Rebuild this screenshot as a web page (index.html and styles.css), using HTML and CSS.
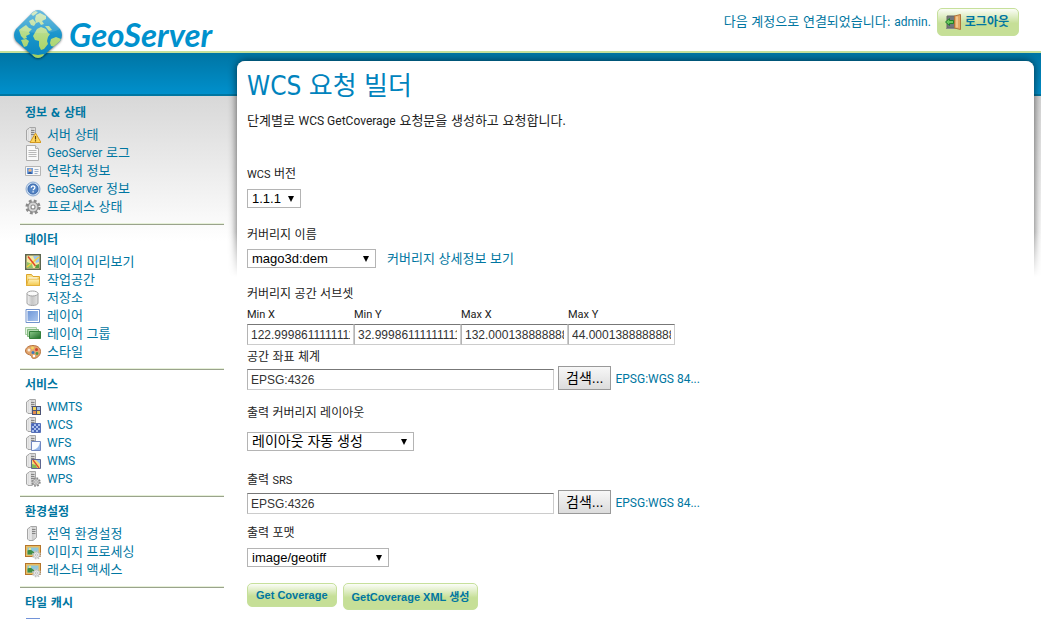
FILE: index.html
```html
<!DOCTYPE html>
<html lang="ko">
<head>
<meta charset="utf-8">
<title>GeoServer: WCS 요청 빌더</title>
<link rel="stylesheet" href="styles.css">
</head>
<body>
<svg class="sprite" aria-hidden="true">
  <defs>
    <linearGradient id="gServer" x1="0" x2="1"><stop offset="0" stop-color="#f4f4f4"/><stop offset=".45" stop-color="#c6c6c6"/><stop offset="1" stop-color="#e2e2e2"/></linearGradient>
    <linearGradient id="gBlue" x1="0" y1="0" x2="1" y2="1"><stop offset="0" stop-color="#6f97d8"/><stop offset="1" stop-color="#a9c4ec"/></linearGradient>
    <linearGradient id="gGreen" x1="0" y1="0" x2="1" y2="1"><stop offset="0" stop-color="#8cc98a"/><stop offset="1" stop-color="#1d6b26"/></linearGradient>
    <linearGradient id="gFolder" x1="0" y1="0" x2="0" y2="1"><stop offset="0" stop-color="#fff3bd"/><stop offset="1" stop-color="#f3c84c"/></linearGradient>
    <linearGradient id="gGlobe" x1="0" y1="0" x2="0" y2="1"><stop offset="0" stop-color="#57b4dc"/><stop offset=".5" stop-color="#1a95cb"/><stop offset="1" stop-color="#0a86c0"/></linearGradient>
    <linearGradient id="gLand" gradientUnits="userSpaceOnUse" x1="0" y1="4" x2="0" y2="50"><stop offset="0" stop-color="#cfe8c0"/><stop offset=".5" stop-color="#b5db84"/><stop offset="1" stop-color="#a4d05c"/></linearGradient>
    <g id="server">
      <path d="M1.500 3 5 .5h5.500v11L7 14.500H3l-1.500-1.500z" fill="url(#gServer)" stroke="#a6a6a6"/>
      <path d="M5 1v13" stroke="#fff"/>
      <path d="M6 3.500h3.500M6 5.500h3.500M6 7.500h3.500" stroke="#858585"/>
    </g>
    <g id="gear">
      <circle r="5" fill="none" stroke="#8b8b8b" stroke-width="3.500" stroke-dasharray="2.200 1.730"/>
      <circle r="4.500" fill="#d5d5d5" stroke="#8b8b8b"/>
      <circle r="1.800" fill="#fff" stroke="#8b8b8b"/>
    </g>
    <g id="softgear">
      <circle r="4.500" fill="none" stroke="#c4c4c4" stroke-width="3.500" stroke-dasharray="2 1.530"/>
      <circle r="4" fill="#ececec" stroke="#bdbdbd"/>
      <circle r="1.500" fill="#fff" stroke="#aaa"/>
    </g>
    <g id="picture">
      <path d="M0 1h16v12H0z" fill="#b5762c"/><path d="M1 2h14v10H1z" fill="#e9bd62"/>
      <path d="M2.500 3.500h11v7h-11z" fill="#8fc8dc"/><path d="M2.500 10.500v-4l3-1 4 3 4-1v3z" fill="#3f8e45"/><circle cx="5" cy="5" r="1" fill="#fff27a"/>
    </g>
  </defs>
  <symbol id="i-status" viewBox="0 0 16 16"><use href="#server"/><path d="M10.500 6 16 15.500H5z" fill="#ffd65c" stroke="#d49a22"/><path d="M10.500 9v3.500M10.500 13.300v1.200" stroke="#6a4300" stroke-width="1.200"/></symbol>
  <symbol id="i-log" viewBox="0 0 16 16"><path d="M1.500.5h9l3 3v12h-12z" fill="#fafafa" stroke="#aeaeae"/><path d="M10.500.5v3h3" fill="#e5e5e5" stroke="#aeaeae"/><path d="M3.500 5.500h8M3.500 7.500h8M3.500 9.500h8M3.500 11.500h8" stroke="#b9b9b9"/></symbol>
  <symbol id="i-contact" viewBox="0 0 16 16"><path d="M.5 3.500h15v9H.5z" fill="#f7f7f7" stroke="#b5b5b5"/><path d="M2 5h6v6H2z" fill="#6f9ddb"/><circle cx="5" cy="7.200" r="1.500" fill="#f3b67a"/><path d="M3 11c0-3 4-3 4 0z" fill="#2c5a9f"/><path d="M9.500 6.500h4M9.500 8.500h4M9.500 10.500h3" stroke="#9db0c8"/></symbol>
  <symbol id="i-about" viewBox="0 0 16 16"><circle cx="8" cy="8" r="7" fill="#c7dbf2" stroke="#8fabd0"/><circle cx="8" cy="8" r="5" fill="#5384c4" stroke="#3865a8"/><path d="M6.200 6.800c0-2.400 3.700-2.400 3.700-.2 0 1.400-1.800 1.300-1.800 2.700M8.100 10.300v1.200" fill="none" stroke="#fff" stroke-width="1.300"/></symbol>
  <symbol id="i-process" viewBox="0 0 16 16"><use href="#gear" transform="translate(8 8) scale(1.120)"/></symbol>
  <symbol id="i-preview" viewBox="0 0 16 16"><path d="M.75.75h14.500v14.500H.75z" fill="#f4e9a0" stroke="#5d6650" stroke-width="1.500"/><path d="M8 2h6v6l-3 1z" fill="#9cc6ee"/><path d="M2 8l5 2 1 4H2z" fill="#8fc468"/><path d="M2 13 14 3" stroke="#f7d040" stroke-width="1.500"/><path d="M3 2.500 10.500 12" stroke="#e0452a" stroke-width="1.500"/><path d="M10 14l1-3 3-1v4z" fill="#5b9b42"/></symbol>
  <symbol id="i-folder" viewBox="0 0 16 16"><path d="M1.500 13.500v-11h5l1.500 2h6.500v9z" fill="#f8dd7f" stroke="#dda52a"/><path d="M1.500 13.500 3.500 7h11v6.500z" fill="url(#gFolder)" stroke="#e3b03a"/><path d="M3.500 6h9" stroke="#fff"/></symbol>
  <symbol id="i-store" viewBox="0 0 16 16"><path d="M2 3.500v9.500c0 3.300 11 3.300 11 0V3.500z" fill="url(#gServer)" stroke="#a3a3a3"/><ellipse cx="7.500" cy="3.500" rx="5.500" ry="2.500" fill="#fafafa" stroke="#a3a3a3"/></symbol>
  <symbol id="i-layer" viewBox="0 0 16 16"><path d="M1 1.500h13.500v13H1z" fill="#fff" stroke="#7293cc"/><path d="M2.500 3H13v10H2.500z" fill="url(#gBlue)"/></symbol>
  <symbol id="i-group" viewBox="0 0 16 16"><path d="M.5 1.500h11v7H.5z" fill="#e2f2df" stroke="#a8cfa5"/><path d="M2.500 3.500h11v7h-11z" fill="#b5dbb2" stroke="#80b77d"/><path d="M4.500 5.500h11v7h-11z" fill="url(#gGreen)" stroke="#35803a"/></symbol>
  <symbol id="i-style" viewBox="0 0 16 16"><path d="M8 1.500c4 0 7.500 2 7.500 6 0 4-3.500 7-7 7-2 0-1.500-2-2.500-3S.5 10.500.5 7C.5 3.500 4 1.500 8 1.500z" fill="#e2a56e" stroke="#b8743f"/><circle cx="4" cy="6" r="1.500" fill="#f9eedd"/><circle cx="7.500" cy="4" r="1.400" fill="#f5d75c"/><circle cx="11.500" cy="5.500" r="1.500" fill="#d7402c"/><circle cx="12" cy="9.500" r="1.400" fill="#4d9b48"/><circle cx="8" cy="8.500" r="1.500" fill="#3f79c2"/><circle cx="9" cy="12" r="1.200" fill="#fff"/></symbol>
  <symbol id="i-wmts" viewBox="0 0 16 16"><use href="#server"/><path d="M7 7h9v9H7z" fill="#4b5375"/><path d="M8 8h3v3H8zM12 12h3v3h-3z" fill="#f0d45a"/><path d="M12 8h3v3h-3z" fill="#9fc2ef"/><path d="M8 12h3v3H8z" fill="#e58d4d"/></symbol>
  <symbol id="i-wcs" viewBox="0 0 16 16"><use href="#server"/><path d="M6.500 6.500h9v9h-9z" fill="#a8bfec" stroke="#5670b8"/><path d="M7 7h2v2H7zM11 7h2v2h-2zM9 9h2v2H9zM13 9h2v2h-2zM7 11h2v2H7zM11 11h2v2h-2zM9 13h2v2H9zM13 13h2v2h-2z" fill="#4a66b8"/></symbol>
  <symbol id="i-wfs" viewBox="0 0 16 16"><use href="#server"/><path d="M6.500 6.500h9v9h-9z" fill="#f8fbff" stroke="#7187c0"/><path d="M15 7v8H8c4-1 6-3 7-8z" fill="#96b6ea"/></symbol>
  <symbol id="i-wms" viewBox="0 0 16 16"><use href="#server"/><path d="M6.500 6.500h9v9h-9z" fill="#f3dd78" stroke="#5e6690"/><path d="M11 7h4v4z" fill="#93bdf0"/><path d="M7 11l4 1 1 3H7z" fill="#82b857"/><path d="M8 7l6 8" stroke="#dc4b30" stroke-width="1.300"/></symbol>
  <symbol id="i-wps" viewBox="0 0 16 16"><use href="#server"/><use href="#gear" transform="translate(11 11) scale(.700)"/></symbol>
  <symbol id="i-global" viewBox="0 0 16 16"><use href="#server" x="1"/></symbol>
  <symbol id="i-image" viewBox="0 0 16 16"><use href="#picture"/><use href="#softgear" transform="translate(11.500 11) scale(.720)"/></symbol>
  <symbol id="i-tile" viewBox="0 0 16 16"><path d="M1 1h14v14H1z" fill="#7293d8"/><path d="M3 3h4v4H3zM9 3h4v4H9zM3 9h4v4H3zM9 9h4v4H9z" fill="#b8cdf2"/></symbol>
</svg>

<header class="header">
  <a class="logo" href="#">
    <svg class="logo-mark" viewBox="0 0 54 54" aria-hidden="true">
      <defs><clipPath id="diamond"><path d="M22 4Q27 0 32 4L49 21Q53 27 49 33L32 48Q27 52 22 48L5 33Q1 27 5 21Z"/></clipPath></defs>
      <path class="logo-edge" d="M22 4Q27 0 32 4L49 21Q53 27 49 33L32 48Q27 52 22 48L5 33Q1 27 5 21Z" fill="url(#gGlobe)"/>
      <g clip-path="url(#diamond)">
        <path fill="url(#gLand)" d="M20 6l4-3 3 1-2 2-3 2zM25 7l4-2 6 3 0 3-4 2 2 3-3 1-2-3-3 1-1-4zM18 13l4-2 3 4-2 3-3-1zM8 22l4-3 3-2 3 3 3 1-3 3 1 2-4 2 1 2-3 1-3-3zM10 32l5-1 3 2-2 5-3 1z"/>
        <path fill="url(#gLand)" d="M26 21l4-2 5 2 2 4 2 1-2 3-1 4 1 3-4 5-3 1-2-4 0-5-4-1-2-4zM40 31l5-2 5 2-1 4-5 4-4-1-1-3zM34 18l4 0 3 4-3 1zM21 46l6 1 6-1-2 6h-6z"/>
      </g>
      <path d="M22 4Q27 0 32 4L49 21Q40 26 27 25T5 21Z" fill="#fff" opacity=".12"/>
    </svg>
    <span class="logo-name">GeoServer</span>
  </a>
  <div class="login">
    <span>다음 계정으로 연결되었습니다: <span class="latin">admin.</span></span>
    <button class="button logout" type="button">
      <svg class="icon" viewBox="0 0 16 16" aria-hidden="true"><path d="M2 2h8v12H2z" fill="#73777b" stroke="#666"/><path d="M1 14.500h13" stroke="#8a8a8a"/><path d="M9.500 2 15.500.5v15l-6-1.500z" fill="#e3a765" stroke="#b0743c"/><path d="M12 2.500v11" stroke="#f4cf9c" stroke-width="1.500"/><path d="M.5 8 4.500 4.500v2h4v3h-4v2z" fill="#69c75c" stroke="#22812c"/></svg>
      로그아웃
    </button>
  </div>
</header>

<div class="page">
  <nav class="sidebar">
    <section class="group">
      <h2>정보 &amp; 상태</h2>
      <ul>
        <li><a href="#"><svg class="icon"><use href="#i-status"/></svg>서버 상태</a></li>
        <li><a href="#"><svg class="icon"><use href="#i-log"/></svg><span><span class="latin">GeoServer</span> 로그</span></a></li>
        <li><a href="#"><svg class="icon"><use href="#i-contact"/></svg>연락처 정보</a></li>
        <li><a href="#"><svg class="icon"><use href="#i-about"/></svg><span><span class="latin">GeoServer</span> 정보</span></a></li>
        <li><a href="#"><svg class="icon"><use href="#i-process"/></svg>프로세스 상태</a></li>
      </ul>
    </section>
    <section class="group">
      <h2>데이터</h2>
      <ul>
        <li><a href="#"><svg class="icon"><use href="#i-preview"/></svg>레이어 미리보기</a></li>
        <li><a href="#"><svg class="icon"><use href="#i-folder"/></svg>작업공간</a></li>
        <li><a href="#"><svg class="icon"><use href="#i-store"/></svg>저장소</a></li>
        <li><a href="#"><svg class="icon"><use href="#i-layer"/></svg>레이어</a></li>
        <li><a href="#"><svg class="icon"><use href="#i-group"/></svg>레이어 그룹</a></li>
        <li><a href="#"><svg class="icon"><use href="#i-style"/></svg>스타일</a></li>
      </ul>
    </section>
    <section class="group">
      <h2>서비스</h2>
      <ul>
        <li><a href="#"><svg class="icon"><use href="#i-wmts"/></svg><span class="latin">WMTS</span></a></li>
        <li><a href="#"><svg class="icon"><use href="#i-wcs"/></svg><span class="latin">WCS</span></a></li>
        <li><a href="#"><svg class="icon"><use href="#i-wfs"/></svg><span class="latin">WFS</span></a></li>
        <li><a href="#"><svg class="icon"><use href="#i-wms"/></svg><span class="latin">WMS</span></a></li>
        <li><a href="#"><svg class="icon"><use href="#i-wps"/></svg><span class="latin">WPS</span></a></li>
      </ul>
    </section>
    <section class="group">
      <h2>환경설정</h2>
      <ul>
        <li><a href="#"><svg class="icon"><use href="#i-global"/></svg>전역 환경설정</a></li>
        <li><a href="#"><svg class="icon"><use href="#i-image"/></svg>이미지 프로세싱</a></li>
        <li><a href="#"><svg class="icon"><use href="#i-image"/></svg>래스터 액세스</a></li>
      </ul>
    </section>
    <section class="group">
      <h2>타일 캐시</h2>
      <ul>
        <li><a href="#" aria-label="타일 레이어"><svg class="icon"><use href="#i-tile"/></svg></a></li>
      </ul>
    </section>
  </nav>

  <main class="panel">
    <div class="panel-shadow"></div>
    <form class="content">
      <h1>WCS 요청 빌더</h1>
      <p class="intro">단계별로 <span class="latin">WCS GetCoverage</span> 요청문을 생성하고 요청합니다.</p>

      <div class="field first">
        <label for="version"><span class="latin">WCS</span> 버전</label>
        <select id="version" class="select w-version"><option>1.1.1</option></select>
      </div>

      <div class="field coverage">
        <label for="coverage">커버리지 이름</label>
        <div class="row wide">
          <select id="coverage" class="select w-coverage"><option>mago3d:dem</option></select>
          <a href="#">커버리지 상세정보 보기</a>
        </div>
      </div>

      <fieldset class="field bounds">
        <legend>커버리지 공간 서브셋</legend>
        <div class="bounds-grid">
          <label>Min X<input class="text" type="text" value="122.99986111111111"></label>
          <label>Min Y<input class="text" type="text" value="32.999861111111111"></label>
          <label>Max X<input class="text" type="text" value="132.00013888888889"></label>
          <label>Max Y<input class="text" type="text" value="44.000138888888889"></label>
        </div>
      </fieldset>

      <div class="field srs">
        <label for="crs">공간 좌표 체계</label>
        <div class="row">
          <input id="crs" class="text w-srs" type="text" value="EPSG:4326">
          <button class="search" type="button">검색...</button>
          <a class="latin" href="#">EPSG:WGS 84...</a>
        </div>
      </div>

      <div class="field layout">
        <label for="layout">출력 커버리지 레이아웃</label>
        <select id="layout" class="select korean w-layout"><option>레이아웃 자동 생성</option></select>
      </div>

      <div class="field output">
        <label for="target">출력 <span class="latin">SRS</span></label>
        <div class="row">
          <input id="target" class="text w-srs" type="text" value="EPSG:4326">
          <button class="search" type="button">검색...</button>
          <a class="latin" href="#">EPSG:WGS 84...</a>
        </div>
      </div>

      <div class="field format">
        <label for="format">출력 포맷</label>
        <select id="format" class="select w-format"><option>image/geotiff</option></select>
      </div>

      <div class="actions">
        <button class="button" type="button">Get Coverage</button>
        <button class="button tall" type="button">GetCoverage XML 생성</button>
      </div>
    </form>
  </main>
</div>
</body>
</html>
```

FILE: styles.css
```css
:root {
  --blue: #0076a1;
  --green: #c6e09b;
  --ui: "DejaVu Sans Condensed", "Noto Sans CJK KR", sans-serif;
  --latin: Roboto, "Noto Sans CJK KR", sans-serif;
  --control: "Liberation Sans", "Noto Sans CJK KR", sans-serif;
}

* { box-sizing: border-box; }

html { scrollbar-width: none; }

body {
  margin: 0;
  overflow-x: hidden;
  background: #fff;
  color: #222;
  font: 13px/18px var(--ui);
}

a { color: var(--blue); text-decoration: none; }

.sprite { position: absolute; width: 0; height: 0; }
.icon { flex: none; width: 16px; height: 16px; }
.latin { font-family: var(--latin); font-size: 12px; }

/* Header */
.header {
  display: flex;
  justify-content: space-between;
  height: 53px;
  padding: 8px 22px 0 11px;
  border-bottom: 2px solid var(--green);
}

.logo { display: flex; gap: 4px; }

.logo-mark {
  position: relative;
  z-index: 1;
  width: 54px;
  height: 54px;
}

.logo-edge { filter: drop-shadow(0 1px 1px rgba(0, 0, 0, .5)); }

.logo-name {
  color: #0091cd;
  font: italic 700 33px/52px Lato, sans-serif;
}

.login {
  display: flex;
  align-items: flex-start;
  gap: 6px;
  color: var(--blue);
  line-height: 28px;
}

/* Green buttons */
.button {
  display: flex;
  align-items: center;
  gap: 4px;
  height: 24px;
  padding: 0 8px;
  border: 1px solid var(--green);
  border-radius: 5px;
  background: linear-gradient(#fbfdf7, #c6df97 55%);
  color: var(--blue);
  font: bold 11px/18px var(--control);
}

.button.tall { height: 27px; }
.button.logout { height: 28px; padding: 0 9px 0 7px; font-size: 12px; }

/* Page frame */
.page {
  display: grid;
  grid-template-columns: 237px minmax(0, 1fr);
  padding-right: 7px;
  background:
    linear-gradient(#0075a4, #0090cc) 0 0 / 100% 41px no-repeat,
    linear-gradient(var(--blue), var(--blue)) 0 41px / 100% 2px no-repeat,
    linear-gradient(#d8d8d8, #fff) 0 43px / 100% 145px no-repeat;
}

/* Sidebar */
.sidebar { padding: 45px 13px 0 20px; }

.group {
  padding: 0 5px 8px;
  border-bottom: 1px solid #9aa38c;
  box-shadow: inset 0 -1px #e6f0d8;
}

.group h2 {
  margin: 0;
  padding-top: 2px;
  color: var(--blue);
  font: bold 12px/26px var(--ui);
}

.group ul { margin: 0; padding: 0; list-style: none; }
.group a { display: flex; align-items: center; gap: 6px; height: 18px; }

/* Content panel */
.panel {
  position: relative;
  margin-top: 8px;
  border-radius: 8px;
  background: #fff;
}

.panel-shadow {
  position: absolute;
  inset: -10px -10px auto;
  height: 226px;
  overflow: hidden;
  -webkit-mask-image: linear-gradient(#000 80%, transparent);
  mask-image: linear-gradient(#000 80%, transparent);
}

.panel-shadow::before {
  position: absolute;
  inset: 10px 10px -20px;
  border-radius: 8px;
  background: #fff;
  box-shadow: 0 0 9px rgba(0, 0, 0, .65);
  content: "";
}

.content { position: relative; padding: 7px 10px 16px; }

h1 {
  margin: 0;
  color: #0083bd;
  font: 26px/36px var(--ui);
}

.intro { margin: 8px 0 0; }

/* Form fields */
.field { margin: 17px 0 0; padding: 0; border: 0; }
.field.first { margin-top: 35px; }
.field.coverage { margin-top: 18px; }
.field.srs { margin-top: 3px; }
.field.layout { margin-top: 14px; }
.field.output { margin-top: 20px; }
.field.format { margin-top: 10px; }

.field > label,
legend {
  display: block;
  margin-bottom: 5px;
  padding: 0;
  font-size: 12px;
}

.field > label .latin { font-size: 11px; }
.field.srs > label, .field.output > label { margin-bottom: 0; }
.field.layout > label { margin-bottom: 10px; }
.field.format > label { margin-bottom: 6px; }
.field.bounds > legend { margin-bottom: 3px; }

.row { display: flex; align-items: flex-end; gap: 4px; }
.row.wide { align-items: center; gap: 11px; }
.row .latin { line-height: 22px; }

.select {
  display: block;
  height: 19px;
  padding: 0 16px 0 4px;
  border: 1px solid #b4b4b4;
  border-radius: 0;
  appearance: none;
  background: #fff url("data:image/svg+xml,%3Csvg xmlns='http://www.w3.org/2000/svg' width='6' height='6'%3E%3Cpath d='M0 0h6L3 6z'/%3E%3C/svg%3E") right 6px center no-repeat;
  color: #000;
  font: 13px/17px var(--control);
}

.select.korean { font-size: 14px; }
.w-version { width: 54px; }
.w-coverage { width: 129px; }
.w-layout { width: 167px; }
.w-format { width: 142px; }

.text {
  height: 21px;
  padding: 0 3px;
  border: 1px solid #ccc;
  border-top-color: #777;
  border-left-color: #b4b4b4;
  background: #fff;
  color: #333;
  font: 12px/18px var(--control);
}

.w-srs { width: 307px; }

.bounds-grid {
  display: grid;
  grid-template-columns: repeat(4, 107px);
  font: 11px/18px var(--latin);
}

.bounds-grid .text { display: block; width: 100%; }

.search {
  height: 24px;
  padding: 0 7px;
  border: 1px solid #999;
  background: linear-gradient(#f7f7f7, #dcdcdc);
  color: #000;
  font: 14px/20px var(--control);
}

.actions {
  display: flex;
  align-items: flex-start;
  gap: 6px;
  margin-top: 16px;
}
```
